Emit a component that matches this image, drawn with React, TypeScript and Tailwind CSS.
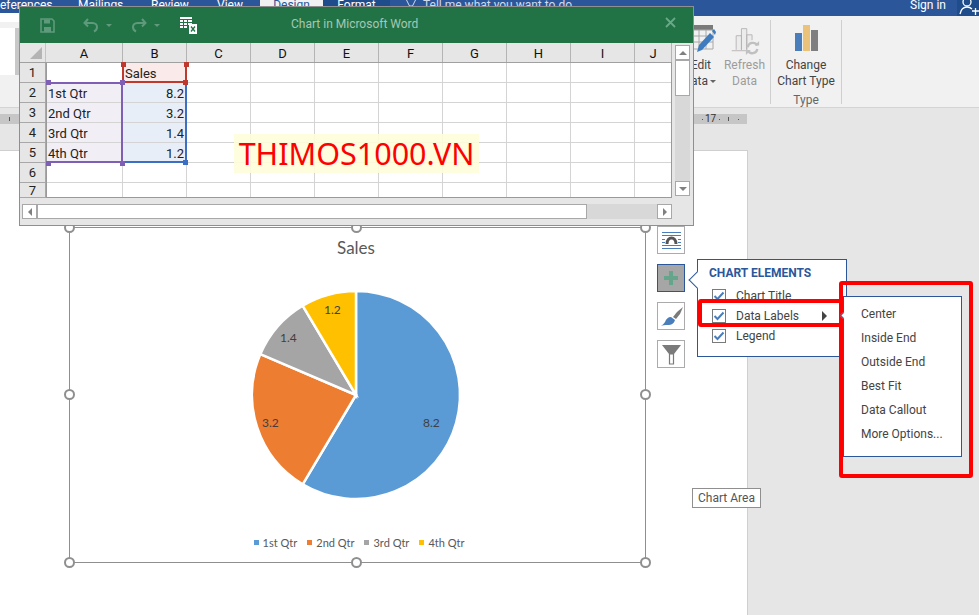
const font = "font-['Roboto',sans-serif]";

const columns = [
  { label: 'A', width: 77 },
  { label: 'B', width: 64 },
  { label: 'C', width: 64 },
  { label: 'D', width: 64 },
  { label: 'E', width: 64 },
  { label: 'F', width: 64 },
  { label: 'G', width: 64 },
  { label: 'H', width: 64 },
  { label: 'I', width: 64 },
  { label: 'J', width: 37 },
];

const rows = [
  { n: 1, a: '', b: 'Sales', h: 20 },
  { n: 2, a: '1st Qtr', b: '8.2', h: 20 },
  { n: 3, a: '2nd Qtr', b: '3.2', h: 20 },
  { n: 4, a: '3rd Qtr', b: '1.4', h: 20 },
  { n: 5, a: '4th Qtr', b: '1.2', h: 20 },
  { n: 6, a: '', b: '', h: 20 },
  { n: 7, a: '', b: '', h: 15 },
];

const slices = [
  { label: '1st Qtr', value: 8.2, color: '#5b9bd5' },
  { label: '2nd Qtr', value: 3.2, color: '#ed7d31' },
  { label: '3rd Qtr', value: 1.4, color: '#a5a5a5' },
  { label: '4th Qtr', value: 1.2, color: '#ffc000' },
];

function piePaths(cx: number, cy: number, r: number) {
  const total = slices.reduce((s, x) => s + x.value, 0);
  let start = 0;
  return slices.map((s) => {
    const end = start + (s.value / total) * Math.PI * 2;
    const x1 = cx + r * Math.sin(start);
    const y1 = cy - r * Math.cos(start);
    const x2 = cx + r * Math.sin(end);
    const y2 = cy - r * Math.cos(end);
    const large = end - start > Math.PI ? 1 : 0;
    start = end;
    return { d: `M${cx} ${cy}L${x1} ${y1}A${r} ${r} 0 ${large} 1 ${x2} ${y2}Z`, color: s.color };
  });
}

function Handle({ className }: { className: string }) {
  return <span className={`absolute h-[11px] w-[11px] rounded-full border-2 border-[#8f8f8f] bg-white ${className}`} />;
}

function Check() {
  return (
    <span className="flex h-[14px] w-[14px] items-center justify-center border border-[#7a7a7a] bg-white">
      <svg width="12" height="10" viewBox="0 0 12 10">
        <path d="M1.5 5l3 3 6-6.5" fill="none" stroke="#4a7ebb" strokeWidth="2" />
      </svg>
    </span>
  );
}

function SmallHandle({ className }: { className: string }) {
  return <span className={`absolute h-[5px] w-[5px] ${className}`} />;
}

function ExcelWindow() {
  return (
    <div className="absolute left-[19px] top-[6px] z-20 h-[220px] w-[675px] border border-[#8f8f8f] bg-[#e6e6e6]">
      {/* title bar */}
      <div className="relative flex h-[36px] items-center bg-[#217346]">
        <svg className="ml-[20px]" width="15" height="15" viewBox="0 0 15 15">
          <path d="M1 1h11l2 2v11H1z" fill="none" stroke="#5f9a7c" strokeWidth="1.6" />
          <path d="M4 1.5h6v4H4zM4 9h7v5H4z" fill="#5f9a7c" />
        </svg>
        <svg className="ml-[28px]" width="16" height="15" viewBox="0 0 16 15">
          <path d="M5 1L1.5 5 5 8.5M2 5h7.5c3 0 4.5 2 4.5 4s-1 3.500-3 4.500" fill="none" stroke="#5f9a7c" strokeWidth="2" />
        </svg>
        <span className="ml-[7px] h-0 w-0 border-x-[3px] border-t-[3px] border-x-transparent border-t-[#5f9a7c]" />
        <svg className="ml-[19px]" width="16" height="15" viewBox="0 0 16 15">
          <path d="M11 1l3.500 4L11 8.500M14 5H6.500C3.500 5 2 7 2 9s1 3.500 3 4.500" fill="none" stroke="#5f9a7c" strokeWidth="2" />
        </svg>
        <span className="ml-[7px] h-0 w-0 border-x-[3px] border-t-[3px] border-x-transparent border-t-[#5f9a7c]" />
        <svg className="ml-[20px]" width="17" height="17" viewBox="0 0 17 17">
          <path d="M0 0h12v2H0zM0 3h3v2H0zM4 3h3v2H4zM8 3h4v2H8zM0 6h3v2H0zM4 6h3v2H4zM8 6h4v2H8zM0 9h3v2H0zM4 9h3v2H4z" fill="#fff" />
          <path d="M9 7h8v10H9z" fill="#fff" />
          <path d="M11 9.500l4 5M15 9.500l-4 5" stroke="#217346" strokeWidth="1.300" />
        </svg>
        <span className="absolute left-[271px] top-[9px] text-[12px] leading-[16px] text-[#a6c7b4]">Chart in Microsoft Word</span>
        <svg className="absolute left-[645px] top-[10px]" width="11" height="11" viewBox="0 0 11 11">
          <path d="M1 1l9 9M10 1l-9 9" stroke="#6ba888" strokeWidth="1.800" />
        </svg>
      </div>

      <div className="flex">
        <div className="w-[652px]">
          {/* column headers */}
          <div className="flex h-[20px] border-b border-[#a0a0a0]">
            <div className="relative w-[26px] shrink-0 border-r border-[#c4c4c4]">
              <span className="absolute bottom-[3px] right-[3px] h-0 w-0 border-b-[12px] border-l-[12px] border-b-[#b4b4b4] border-l-transparent" />
            </div>
            {columns.map((c) => (
              <div
                key={c.label}
                className="flex shrink-0 items-center justify-center border-r border-[#b4b4b4] pt-[1px] text-[13px] leading-none text-[#111]"
                style={{ width: c.width }}
              >
                {c.label}
              </div>
            ))}
          </div>

          {/* rows */}
          <div className="relative">
            {rows.map((r) => (
              <div key={r.n} className="flex text-[13px] leading-[16px] text-[#222]" style={{ height: r.h }}>
                <div className="flex w-[26px] shrink-0 items-center justify-center border-b border-r border-[#a8a8a8] pt-[1px] text-[#222]">
                  {r.n}
                </div>
                {columns.map((c, i) => {
                  let cls = 'bg-white';
                  if (i === 0 && r.a) cls = 'bg-[#f2eef6] pl-[2px] justify-start';
                  if (i === 1 && r.n === 1) cls = 'bg-[#faeaea] pl-[2px] justify-start';
                  else if (i === 1 && r.b) cls = 'bg-[#e8eef8] pr-[2px] justify-end';
                  return (
                    <div
                      key={c.label}
                      className={`flex shrink-0 items-center border-b border-r border-[#d4d4d4] pt-[2px] ${cls}`}
                      style={{ width: c.width, height: r.h }}
                    >
                      {i === 0 ? r.a : i === 1 ? r.b : ''}
                    </div>
                  );
                })}
              </div>
            ))}
            <div className="pointer-events-none absolute bottom-0 left-[26px] h-[135px] w-[626px] border-b border-r border-l border-[#9a9a9a]" />

            {/* series selection */}
            <div className="absolute left-[102px] top-0 h-[20px] w-[65px] border-x-2 border-b-2 border-[#c0392f]" />
            <SmallHandle className="left-[101px] top-[-1px] bg-[#c0392f]" />
            <SmallHandle className="left-[164px] top-[-1px] bg-[#c0392f]" />
            <SmallHandle className="left-[163px] top-[17px] bg-[#c0392f]" />
            <div className="absolute left-[26px] top-[19px] h-[81px] w-[77px] border-2 border-[#7f5fb5] border-l-0" />
            <SmallHandle className="left-[26px] top-[17px] bg-[#7f5fb5]" />
            <SmallHandle className="left-[26px] top-[98px] bg-[#7f5fb5]" />
            <SmallHandle className="left-[100px] top-[17px] bg-[#7f5fb5]" />
            <SmallHandle className="left-[100px] top-[98px] bg-[#7f5fb5]" />
            <div className="absolute left-[105px] top-[22px] h-[78px] w-[62px] border-b-2 border-r-2 border-[#3a6fc4]" />
            <SmallHandle className="left-[163px] top-[97px] bg-[#3a6fc4]" />

            {/* watermark */}
            <div className="absolute left-[214px] top-[71px] flex h-[39px] w-[245px] items-center justify-center bg-[#fefedc]/90 font-['Noto_Sans',sans-serif] text-[30.500px] leading-none text-[#ff0000]">
              THIMOS1000.VN
            </div>
          </div>

          {/* horizontal scrollbar */}
          <div className="ml-[2px] mt-[6px] flex h-[15px] w-[650px]">
            <div className="flex w-[15px] items-center justify-center border border-[#a8a8a8] bg-white">
              <span className="h-0 w-0 border-y-[4px] border-r-[4px] border-y-transparent border-r-[#808080]" />
            </div>
            <div className="w-[550px] border border-[#a8a8a8] bg-white" />
            <div className="w-[70px] bg-[#d8d8d8]" />
            <div className="flex w-[15px] items-center justify-center border border-[#a8a8a8] bg-white">
              <span className="h-0 w-0 border-y-[4px] border-l-[4px] border-y-transparent border-l-[#808080]" />
            </div>
          </div>
        </div>

        {/* vertical scrollbar */}
        <div className="ml-[3px] mt-[2px] flex h-[151px] w-[15px] flex-col bg-[#d8d8d8]">
          <div className="flex h-[15px] items-center justify-center border border-[#a8a8a8] bg-white">
            <span className="h-0 w-0 border-x-[4px] border-b-[4px] border-x-transparent border-b-[#808080]" />
          </div>
          <div className="h-[36px] border border-[#a8a8a8] bg-white" />
          <div className="flex-1" />
          <div className="flex h-[15px] items-center justify-center border border-[#a8a8a8] bg-white">
            <span className="h-0 w-0 border-x-[4px] border-t-[4px] border-x-transparent border-t-[#808080]" />
          </div>
        </div>
      </div>
    </div>
  );
}

function TopBar() {
  const tabs = [
    { label: 'eferences', w: 78 },
    { label: 'Mailings', w: 73 },
    { label: 'Review', w: 66 },
    { label: 'View', w: 43 },
  ];
  return (
    <div className="flex h-[16px] shrink-0 overflow-hidden bg-[#2b579a] text-[12px] leading-[12px]">
      {tabs.map((t) => (
        <div key={t.label} className="text-white" style={{ width: t.w }}>
          <span className="block -translate-y-[1px]">{t.label}</span>
        </div>
      ))}
      <div className="flex w-[63px] justify-center bg-[#f1f1f1] text-[#2b579a]">
        <span className="-translate-y-[1px]">Design</span>
      </div>
      <div className="flex w-[67px] justify-center bg-[#1f4c8a] text-white">
        <span className="-translate-y-[1px]">Format</span>
      </div>
      <svg className="ml-[16px]" width="10" height="7" viewBox="0 0 10 7">
        <path d="M.5 0l3 6h3l3-6" fill="none" stroke="#cfdaeb" strokeWidth="1" />
      </svg>
      <span className="ml-[7px] -translate-y-[1px] text-[#cfdaeb]">Tell me what you want to do</span>
      <span className="ml-auto mr-[11px] -translate-y-[1px] text-white">Sign in</span>
      <div className="h-[16px] w-[22px] overflow-hidden bg-[#1f4c8a]">
        <svg width="22" height="16" viewBox="0 0 22 16">
          <circle cx="10" cy="2" r="4" fill="none" stroke="#fff" strokeWidth="1.300" />
          <path d="M3 14c1-5 4-7 7-7s4 1 5 2M15 11h7M18.500 8v7" fill="none" stroke="#fff" strokeWidth="1.300" />
        </svg>
      </div>
    </div>
  );
}

function Ribbon() {
  return (
    <div className="flex h-[92px] shrink-0 border-b border-[#d4d4d4] bg-[#f1f1f1] text-[12px] leading-[16px] text-[#444]">
      <div className="mt-[-3px] h-[9px] w-[19px] bg-white" />
      <div className="absolute left-0 top-[28px] flex h-[47px] w-[19px] justify-end bg-white">
        <div className="h-full w-[4px] bg-[#c8c8c8]" />
      </div>

      {/* Edit Data */}
      <div className="ml-[656px] flex w-[41px] flex-col items-end pt-[9px]">
        <svg width="24" height="32" viewBox="0 0 24 32">
          <path d="M0 0h21v5H0z" fill="#7a7a7a" />
          <path d="M0 5h21v19H0zM0 11h21M0 17h21M7 5v19M14 5v19" fill="none" stroke="#a8a8a8" strokeWidth="1" />
          <path d="M5 27l2-7L18 8l4 4L10 25z" fill="#3f7cbf" />
          <path d="M20 6l2-2 2 3-1 3z" fill="#3f7cbf" />
        </svg>
        <div className="mr-[5px]">Edit</div>
        <div className="flex items-center gap-[2px]">
          Data
          <span className="h-0 w-0 border-x-[3px] border-t-[3px] border-x-transparent border-t-[#666]" />
        </div>
      </div>

      <div className="flex w-[57px] flex-col items-center pt-[10px] text-[#9c9c9c]">
        <svg width="32" height="30" viewBox="0 0 32 34">
          <path d="M1 28h21M6 27V11h6v16M12 27V3h6v24M18 27V10h6v6" fill="#ececec" stroke="#b4b0b0" strokeWidth="1" />
          <path d="M19 24a6 6 0 0 1 11-2M30 26a6 6 0 0 1-11 2" fill="none" stroke="#c0c0c0" strokeWidth="2.600" />
          <path d="M27 22h5v-5zM22 28h-5v5z" fill="#c0c0c0" />
        </svg>
        <div className="mt-[1px]">Refresh</div>
        <div>Data</div>
      </div>

      <div className="ml-[-3px] mt-[4px] h-[84px] w-px bg-[#cfcfcf]" />

      <div className="flex w-[70px] flex-col items-center">
        <div className="mt-[9px] flex h-[26px] items-end gap-px">
          <span className="h-[18px] w-[7px] bg-[#4a7ebb]" />
          <span className="h-[26px] w-[7px] bg-[#eac27a]" />
          <span className="h-[21px] w-[7px] bg-[#7f7f7f]" />
        </div>
        <div className="mt-[6px]">Change</div>
        <div>Chart Type</div>
        <div className="mt-[3px] text-[#666]">Type</div>
      </div>

      <div className="mt-[4px] h-[84px] w-px bg-[#cfcfcf]" />
    </div>
  );
}

function Ruler() {
  return (
    <div className="mt-[6px] flex h-[10px] w-[747px] shrink-0 items-center bg-[#c6c6c6] text-[10px] leading-none text-[#333]">
      <span className="ml-[9px] h-[4px] w-px bg-[#555]" />
      <span className="ml-[692px] h-px w-px bg-[#555]" />
      <span className="ml-[2px]">17</span>
      <span className="ml-[3px] h-px w-px bg-[#555]" />
      <span className="ml-[8px] h-[4px] w-px bg-[#555]" />
      <span className="ml-[9px] h-px w-px bg-[#555]" />
    </div>
  );
}

function LayoutIcon() {
  return (
    <svg width="25" height="25" viewBox="0 0 25 25">
      <path d="M3 4.500h19M3 7.500h19M3 11.500h3M19 11.500h3M3 14.500h3M19 14.500h3M3 17.500h19M3 20.500h19" stroke="#4a7ebb" strokeWidth="1" />
      <path d="M8 16c0-8 9-8 9 0" fill="none" stroke="#555" strokeWidth="3" />
    </svg>
  );
}

function BrushIcon() {
  return (
    <svg width="25" height="25" viewBox="0 0 25 25">
      <path d="M24 3l-6 5-4 5 3 2 4-5z" fill="#7a7a7a" />
      <path d="M12 13l4 3c-1 4-4 5-7 5-3 0-6 0-7 1 1-1 3-2 4-4 1-3 3-5 6-5z" fill="#4a7ebb" />
    </svg>
  );
}

function FilterIcon() {
  return (
    <svg width="25" height="25" viewBox="0 0 25 25">
      <path d="M3 3h19l-7 9H10z" fill="#7a7a7a" />
      <path d="M10.500 12h4v10h-4z" fill="#fff" stroke="#7a7a7a" strokeWidth="1.200" />
    </svg>
  );
}

function ChartElements() {
  return (
    <>
      {/* flyout */}
      <div className="absolute left-[697px] top-[108px] z-10 h-[98px] w-[150px] border border-[#2b579a] bg-white">
        <span className="absolute left-[-7px] top-[14px] h-[12px] w-[12px] rotate-45 border-b border-l border-[#2b579a] bg-white" />
        <div className="relative pl-[11px] pt-[5px] text-[12px] font-bold leading-[16px] text-[#2b579a]">CHART ELEMENTS</div>
        <div className="relative mt-[5px] flex flex-col text-[12px] text-[#444]">
          {['Chart Title', 'Data Labels', 'Legend'].map((t) => (
            <div key={t} className="flex h-[20px] items-center pl-[14px]">
              <Check />
              <span className="ml-[10px]">{t}</span>
              {t === 'Data Labels' && (
                <span className="ml-[23px] h-0 w-0 border-y-[5px] border-l-[5px] border-y-transparent border-l-[#444]" />
              )}
            </div>
          ))}
        </div>
      </div>

      {/* red highlights and submenu */}
      <div className="absolute left-[698px] top-[148px] z-10 h-[28px] w-[145px] rounded-[3px] border-4 border-[#ff0000]" />
      <div className="absolute left-[839px] top-[130px] z-10 h-[197px] w-[134px] rounded-[3px] border-4 border-[#ff0000]" />
      <div className="absolute left-[843px] top-[145px] z-10 flex h-[161px] w-[119px] flex-col border border-[#2b579a] bg-white pl-[17px] pt-[5px] text-[12px] text-[#444]">
        <span className="absolute left-[-3px] top-[16px] h-[5px] w-[5px] rotate-45 border-b border-l border-[#2b579a] bg-white" />
        {['Center', 'Inside End', 'Outside End', 'Best Fit', 'Data Callout', 'More Options...'].map((t) => (
          <div key={t} className="flex h-[24px] items-center">
            {t}
          </div>
        ))}
      </div>

      <div className="absolute left-[692px] top-[337px] z-10 flex h-[20px] w-[69px] items-center justify-center border border-[#8f8f8f] bg-white text-[12px] text-[#555]">
        Chart Area
      </div>
    </>
  );
}

function Chart() {
  const paths = piePaths(103, 103, 104);
  return (
    <div className="relative ml-[69px] flex h-[336px] w-[577px] flex-col items-center border border-[#8f8f8f] bg-white font-['Lato',sans-serif] text-[#595959]">
      <div className="mr-[3px] mt-[8px] text-[17px] leading-[24px]">Sales</div>
      <div className="relative mr-[3px] mt-[32px] h-[206px] w-[206px]">
        <svg className="overflow-visible" width="206" height="206" viewBox="0 0 206 206">
          {paths.map((p) => (
            <path key={p.color} d={p.d} fill={p.color} stroke="#fff" strokeWidth="2.500" />
          ))}
        </svg>
        <span className="absolute left-[170px] top-[125px] text-[12px] leading-none text-[#404040]">8.2</span>
        <span className="absolute left-[9px] top-[125px] text-[12px] leading-none text-[#404040]">3.2</span>
        <span className="absolute left-[27px] top-[40px] text-[12px] leading-none text-[#404040]">1.4</span>
        <span className="absolute left-[71px] top-[12px] text-[12px] leading-none text-[#404040]">1.2</span>
      </div>
      <div className="mt-[39px] flex gap-[10px] pl-[3px] text-[11px] leading-none">
        {slices.map((s) => (
          <div key={s.label} className="flex items-center gap-[4px]">
            <span className="h-[5px] w-[5px]" style={{ backgroundColor: s.color }} />
            {s.label}
          </div>
        ))}
      </div>
      <Handle className="left-[-6px] top-[-6px]" />
      <Handle className="left-[281px] top-[-6px]" />
      <Handle className="left-[570px] top-[-6px]" />
      <Handle className="left-[-6px] top-[161px]" />
      <Handle className="left-[570px] top-[161px]" />
      <Handle className="bottom-[-6px] left-[-6px]" />
      <Handle className="bottom-[-6px] left-[281px]" />
      <Handle className="bottom-[-6px] left-[570px]" />
    </div>
  );
}

export default function App() {
  return (
    <div className={`relative flex h-[615px] w-[979px] flex-col overflow-hidden bg-[#e6e6e6] ${font}`}>
      <TopBar />
      <Ribbon />
      <Ruler />
      <ExcelWindow />

      <div className="mt-[26px] flex w-[748px] flex-1 border-r border-t border-[#cfcfcf] bg-white">
        <div className="relative flex w-full pt-[76px]">
          <Chart />
          <div className="-mt-[1px] ml-[11px] flex flex-col gap-[10px]">
            <div className="flex h-[28px] w-[28px] items-center justify-center border border-[#ababab] bg-white">
              <LayoutIcon />
            </div>
            <div className="flex h-[28px] w-[28px] items-center justify-center border border-[#2b579a] bg-[#a6a6a6]">
              <svg width="16" height="16" viewBox="0 0 16 16">
                <path d="M6 1h4v5h5v4h-5v5H6v-5H1V6h5z" fill="#64a58b" />
              </svg>
            </div>
            <div className="flex h-[28px] w-[28px] items-center justify-center border border-[#ababab] bg-white">
              <BrushIcon />
            </div>
            <div className="flex h-[28px] w-[28px] items-center justify-center border border-[#ababab] bg-white">
              <FilterIcon />
            </div>
          </div>
          <ChartElements />
        </div>
      </div>
    </div>
  );
}
